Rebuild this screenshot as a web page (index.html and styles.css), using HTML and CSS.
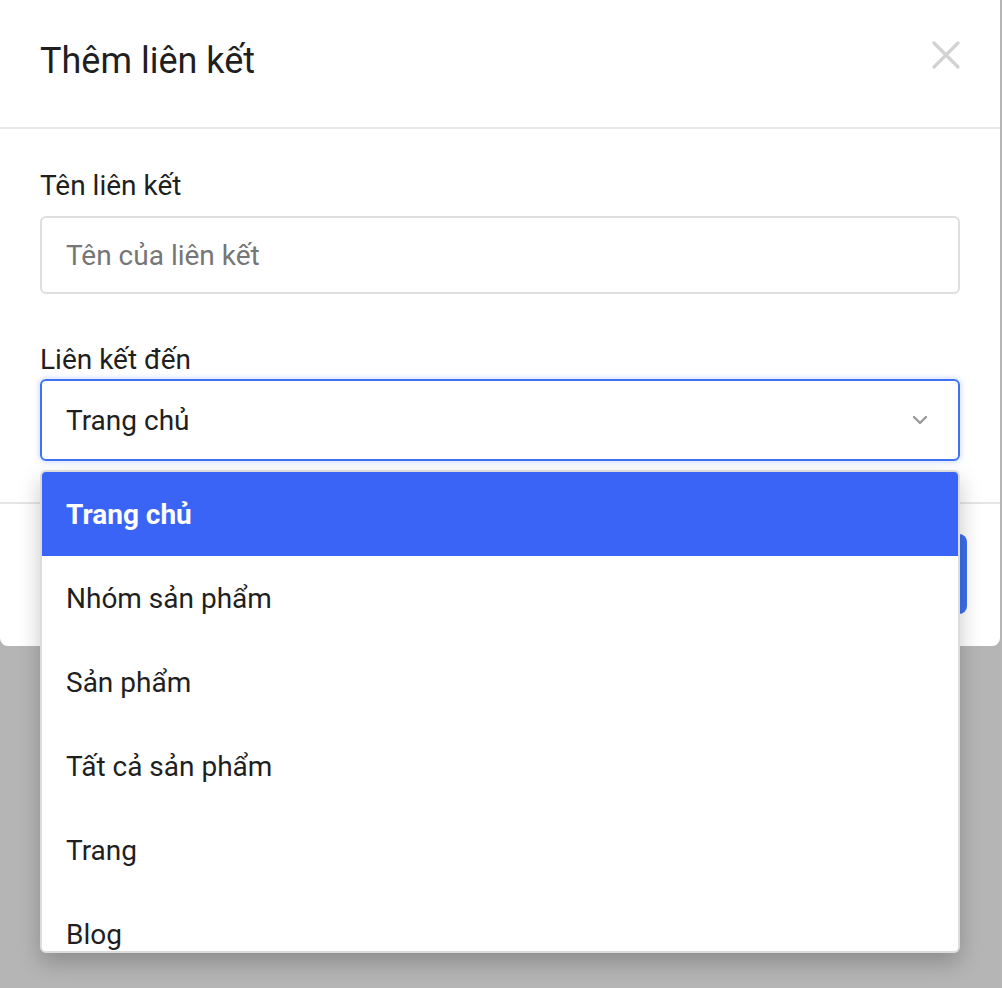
FILE: index.html
```html
<!DOCTYPE html>
<html lang="vi">
<head>
<meta charset="utf-8">
<title>Thêm liên kết</title>
<link rel="stylesheet" href="styles.css">
</head>
<body>
<div class="modal">
  <div class="modal-header">
    <h2 class="modal-title">Thêm liên kết</h2>
    <button class="close-btn" aria-label="Đóng">
      <svg width="28" height="28" viewBox="0 0 28 28"><path d="M2 2 L26 26 M26 2 L2 26" stroke="#d2d2d2" stroke-width="3.2" stroke-linecap="round" fill="none"/></svg>
    </button>
  </div>
  <div class="modal-body">
    <div class="field">
      <label class="field-label">Tên liên kết</label>
      <div class="input">Tên của liên kết</div>
    </div>
    <div class="field field-select">
      <label class="field-label">Liên kết đến</label>
      <div class="select">
        <span>Trang chủ</span>
        <svg class="chevron" width="16" height="10" viewBox="0 0 16 10"><path d="M2 2 L8 8 L14 2" stroke="#9a9a9a" stroke-width="2.4" stroke-linecap="round" stroke-linejoin="round" fill="none"/></svg>
      </div>
      <ul class="dropdown">
        <li class="option active">Trang chủ</li>
        <li class="option">Nhóm sản phẩm</li>
        <li class="option">Sản phẩm</li>
        <li class="option">Tất cả sản phẩm</li>
        <li class="option">Trang</li>
        <li class="option">Blog</li>
      </ul>
    </div>
  </div>
  <div class="modal-footer">
    <button class="btn-primary">Lưu</button>
  </div>
</div>
</body>
</html>
```
FILE: styles.css
```css
* { box-sizing: border-box; }
html, body {
  margin: 0;
  padding: 0;
  background: #b5b5b5;
  font-family: Roboto, "Noto Sans", "Liberation Sans", sans-serif;
  color: #212121;
}
body { height: 988px; overflow: hidden; }

.modal {
  position: relative;
  width: 1000px;
  height: 646px;
  background: #fff;
  border-radius: 0 0 8px 8px;
}

.modal-header {
  height: 129px;
  display: flex;
  align-items: center;
  justify-content: space-between;
  padding: 0 40px 6px 40px;
  border-bottom: 2px solid #e6e6e6;
}
.modal-title {
  margin: 0;
  font-size: 36px;
  font-weight: 400;
  line-height: 40px;
  color: #1f1f1f;
}
.close-btn {
  border: 0;
  background: none;
  padding: 0;
  width: 28px;
  height: 28px;
  margin-top: -12px;
  display: flex;
}

.modal-body {
  padding: 43px 40px 0 40px;
  height: 375px;
  border-bottom: 2px solid #e6e6e6;
}
.field { display: flex; flex-direction: column; }
.field-label {
  font-size: 28px;
  line-height: 28px;
  margin-bottom: 16px;
  color: #1f1f1f;
}
.input {
  height: 78px;
  border: 2px solid #dedede;
  border-radius: 6px;
  padding: 0 24px;
  display: flex;
  align-items: center;
  font-size: 28px;
  color: #767676;
}
.field-select {
  position: relative;
  margin-top: 52px;
}
.field-select .field-label { margin-bottom: 5px; }
.select {
  height: 82px;
  border: 2px solid #3d72f2;
  border-radius: 6px;
  padding: 0 30px 0 24px;
  display: flex;
  align-items: center;
  justify-content: space-between;
  font-size: 28px;
  color: #1f1f1f;
  box-shadow: 0 0 4px 2px rgba(61, 114, 242, 0.18);
}

.dropdown {
  position: absolute;
  left: 0;
  right: 0;
  top: 124px;
  height: 483px;
  margin: 0;
  padding: 0;
  list-style: none;
  background: #fff;
  border: 2px solid #dcdcdc;
  border-radius: 6px;
  overflow: hidden;
  z-index: 5;
  box-shadow: 0 10px 22px rgba(0, 0, 0, 0.22);
}
.option {
  height: 84px;
  display: flex;
  align-items: center;
  padding: 0 24px;
  font-size: 28px;
  color: #1f1f1f;
}
.option.active {
  background: #3a64f6;
  color: #fff;
  font-weight: 700;
}

.modal-footer {
  display: flex;
  justify-content: flex-end;
  padding: 30px 33px 0 0;
}
.btn-primary {
  width: 140px;
  height: 80px;
  border: 0;
  border-radius: 8px;
  background: #3d70ee;
  color: #fff;
  font-family: inherit;
  font-size: 24px;
}
```
